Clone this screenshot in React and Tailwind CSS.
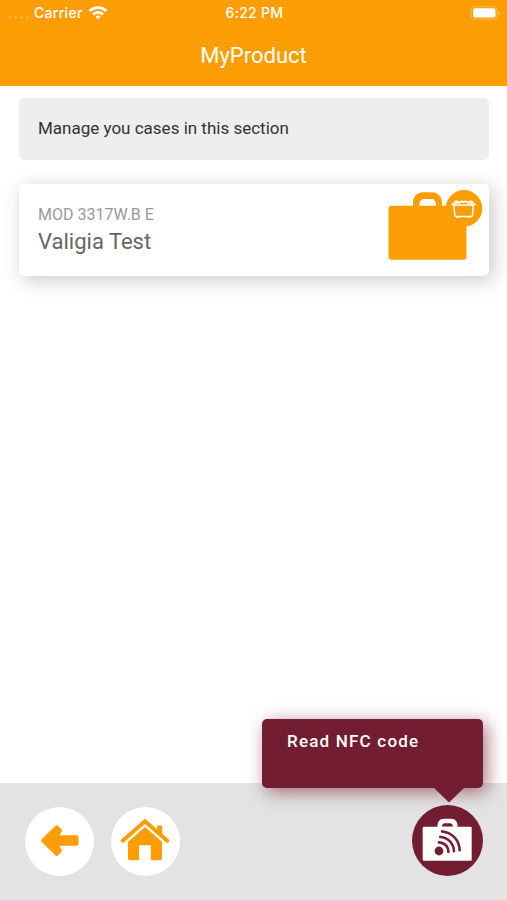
import React from 'react';

const WifiIcon = () => (
  <svg width="20" height="14" viewBox="0 0 20 14" fill="#fff">
    <path d="M10 .2C6.300.2 3 1.600.6 3.900l2 2a10.600 10.600 0 0 1 14.800 0l2-2C17 1.600 13.700.2 10 .2Z" />
    <path d="M10 5c-2.300 0-4.400.9-6 2.400l2 2a5.800 5.800 0 0 1 8 0l2-2A8.700 8.700 0 0 0 10 5Z" />
    <path d="M10 9.600c-1 0-1.900.4-2.600 1.100L10 13.500l2.600-2.800c-.7-.7-1.600-1.100-2.600-1.100Z" />
  </svg>
)

const BatteryIcon = () => (
  <svg width="31" height="14" viewBox="0 0 31 14">
    <rect x="1" y=".7" width="26" height="12.600" rx="3.600" fill="none" stroke="#fff" strokeOpacity=".3" strokeWidth="1" />
    <rect x="3" y="2.300" width="22.500" height="9.200" rx="1.800" fill="#fff" />
    <path d="M28.300 5v4c.9-.3 1.400-1.100 1.400-2s-.5-1.700-1.400-2Z" fill="#fff" fillOpacity=".4" />
  </svg>
)

const CaseIcon = () => (
  <svg width="96" height="72" viewBox="388 190 96 72">
    <path d="M413 207v-4c0-6.500 4-10.700 10-10.700h9c6 0 10 4.200 10 10.700v4h-6v-2.500c0-3.500-2-5.500-5-5.500h-6.500c-3 0-5 2-5 5.500v2.500Z" fill="#fc9e03" />
    <rect x="388.500" y="205.700" width="78" height="54" rx="3.200" fill="#fc9e03" />
    <circle cx="464" cy="208.400" r="18.300" fill="#fc9e03" />
    <g fill="none" stroke="#fff" strokeLinejoin="round" strokeLinecap="round">
      <path d="M454 205h19.200v2l-.7 8c-.1.900-.7 1.400-1.500 1.400h-14.800c-.8 0-1.400-.5-1.500-1.400l-.7-8Z" strokeWidth="1.500" />
      <path d="M452.200 204.800l3.400-3.600 2.400.2-2.800 3.200M475 204.800l-3.400-3.600-2.400.2 2.800 3.200" strokeWidth="1.500" />
      <path d="M459 203.200c1.200-1.600 3-2.200 4.600-1.200 1.600-1 3.400-.4 4.600 1.200" strokeWidth="2" />
      <path d="M457 217.300h2.200M468 217.300h2.200" strokeWidth="1.600" />
    </g>
  </svg>
)

const BackIcon = () => (
  <svg width="38" height="31" viewBox="0 0 38 31" fill="#fc9e03">
    <path d="M.6 14.200 14.200.9c.9-.9 2.100-.9 3 0l3.100 3.100c.8.8.9 1.700.2 2.700l-2 3.600h17c1.200 0 2 .8 2 2v6.500c0 1.200-.8 2-2 2h-17l2 3.600c.7 1 .6 1.900-.2 2.700l-3.100 3.100c-.9.900-2.100.9-3 0L.6 16.800c-.8-.8-.8-1.800 0-2.600Z" />
  </svg>
)

const HomeIcon = () => (
  <svg width="50" height="42" viewBox="120 819 50 42">
    <path d="m122.700 840.700 22.300-19.400 22.300 19.400" fill="none" stroke="#fc9e03" strokeWidth="4" strokeLinecap="round" />
    <path d="M157.100 826.500c0-.6.400-1 1-1h3.200c.6 0 1 .4 1 1v10l-5.200-4.500Z" fill="#fc9e03" />
    <path d="m145 827 17 14.800v16.500c0 1.200-.8 2-2 2h-9.200v-15h-11.800v15H130c-1.200 0-2-.8-2-2v-16.500Z" fill="#fc9e03" />
  </svg>
)

const NfcCaseIcon = () => (
  <svg width="71" height="71" viewBox="412 805 71 71">
    <path d="M437.500 828v-2.500c0-4 2.500-6.800 6.500-6.800h7c4 0 6.500 2.800 6.500 6.800v2.500Z" fill="#fff" />
    <path d="M442 826.700c0-2.300 1-3.400 3-3.400h4.800c2 0 3 1.100 3 3.400Z" fill="#731d33" />
    <rect x="422.700" y="826.700" width="49" height="34" rx="1.200" fill="#fff" />
    <circle cx="439" cy="851" r="4.400" fill="#731d33" />
    <g fill="none" stroke="#731d33" strokeWidth="2.500">
      <path d="M437.800 842.300c6.500 0 11 4.200 10.600 10.500" />
      <path d="M439.200 836.700c8.800.6 15 6.500 14.800 15.600" />
      <path d="M441 831.200c11 1 18.700 8.600 18.700 20" />
    </g>
  </svg>
)

function App() {
  return (
    <div className="flex h-[900px] w-[507px] flex-col overflow-hidden bg-white font-['Roboto',sans-serif]">
      <header className="h-[86px] bg-[#fc9e03] text-white">
        <div className="grid h-[26px] grid-cols-3 items-center pl-2 pr-[6px] font-['Inter',sans-serif] text-[14px] font-medium tracking-[0.3px]">
          <div className="flex items-center">
            <div className="mt-2 flex w-[26px] gap-[3px]">
              <span className="h-[3px] w-[3px] rounded-full bg-white/25"></span>
              <span className="h-[3px] w-[3px] rounded-full bg-white/25"></span>
              <span className="h-[3px] w-[3px] rounded-full bg-white/25"></span>
              <span className="h-[3px] w-[3px] rounded-full bg-white/25"></span>
            </div>
            <span className="mr-[5px] pb-[2px]">Carrier</span>
            <WifiIcon />
          </div>
          <span className="pb-[2px] text-center">6:22 PM</span>
          <div className="flex justify-end"><BatteryIcon /></div>
        </div>
        <h1 className="pt-[14px] text-center text-[22px] leading-[32px]">MyProduct</h1>
      </header>

      <main className="flex flex-1 flex-col gap-6 pl-[19px] pr-[18px] pt-3">
        <div className="h-[62px] rounded-[5px] bg-[#eee] px-[19px] pt-[17px] text-[17px] leading-[26px] text-[#333]">
          Manage you cases in this section
        </div>
        <div className="flex h-[92px] justify-between rounded-[5px] bg-white pl-[19px] pr-[5px] shadow-[4px_4px_20px_rgba(0,0,0,0.22)]">
          <div className="pt-[21px]">
            <p className="text-[16px] leading-5 text-[#999]">MOD 3317W.B E</p>
            <p className="text-[22px] leading-[33px] text-[#666]">Valigia Test</p>
          </div>
          <div className="pt-[6px]"><CaseIcon /></div>
        </div>
      </main>

      <footer className="relative flex h-[117px] items-start bg-[#e3e3e3] pl-[25px] pr-6 pt-[22px]">
        <button className="mt-[2px] flex h-[69px] w-[69px] items-center justify-center rounded-full bg-white pb-[2px]">
          <BackIcon />
        </button>
        <button className="ml-[17px] mt-[2px] flex h-[69px] w-[69px] items-center justify-center rounded-full bg-white pb-[3px] pr-[1px]">
          <HomeIcon />
        </button>
        <button className="ml-auto h-[71px] w-[71px] rounded-full bg-[#731d33]">
          <NfcCaseIcon />
        </button>
        <div className="absolute right-6 top-[-64px] h-[69px] w-[221px] rounded-[5px] bg-[#731d33] px-[25px] pt-[10px] text-[17px] font-medium leading-6 tracking-[1.200px] text-white shadow-[4px_4px_18px_rgba(115,29,51,0.6)]">
          Read NFC code
          <svg className="absolute right-[18px] top-[68px]" width="32" height="16" viewBox="0 0 32 16">
            <path d="M0 0h32L16 15.500Z" fill="#731d33" />
          </svg>
        </div>
      </footer>
    </div>
  );
}

export default App;
